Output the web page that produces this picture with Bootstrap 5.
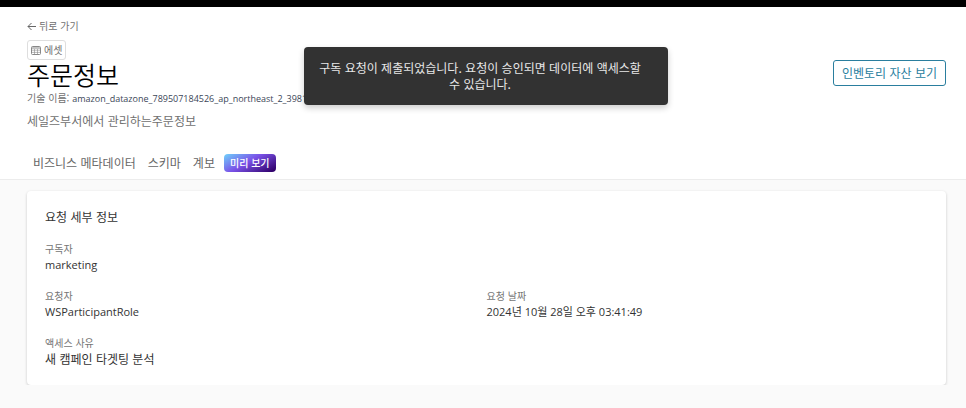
<!DOCTYPE html>
<html lang="ko">
<head>
<meta charset="utf-8">
<meta name="viewport" content="width=device-width, initial-scale=1">
<title>주문정보</title>
<link href="https://cdn.jsdelivr.net/npm/bootstrap@5.3.0/dist/css/bootstrap.min.css" rel="stylesheet">
<style>
body{font-family:"Noto Sans CJK KR",sans-serif;font-size:12px;line-height:16px;background:#fafafa;color:#333}
.topbar{height:7px;background:#000}
.gutter{padding-left:27px;padding-right:20px}
.page-head{border-bottom:1px solid #ececec;padding-top:11px}
.tiny{font-size:10px;line-height:16px}
.soft{color:#707070}
.back-link{gap:3px}
.kind{border:1px solid #dedede;border-radius:3px;padding:1px 3px;gap:3px;margin-top:6px}
.asset-title{font-size:25px;line-height:28px;color:#000;font-weight:350}
.tech-line{margin-top:2px}
.tech{color:#3b4657;font-family:"Open Sans",sans-serif;font-size:9px}
.desc{margin-top:6px}
.btn-asset{--bs-btn-color:#2a7e9e;--bs-btn-border-color:#2a7e9e;--bs-btn-hover-bg:#2a7e9e;--bs-btn-hover-color:#fff;--bs-btn-font-size:12px;--bs-btn-padding-x:8px;--bs-btn-padding-y:4px;--bs-btn-line-height:16px;--bs-btn-border-radius:3px;margin-top:42px}
.tabs{gap:12px;padding:25px 6px 7px}
.tabs .nav-link{padding:0;color:#666;font-size:12px;line-height:18px}
.tabs .nav-link.active{font-size:10px;font-weight:500;color:#fff;padding:0 6px;border-radius:4px;margin-left:-3px;background:linear-gradient(150deg,#6fd2fb 0%,#7a52e8 45%,#30006a 95%)}
.detail-card{border-radius:4px;box-shadow:0 1px 3px rgba(0,0,0,.2);margin-top:11px;padding:17px 18px 18px}
.detail-title{font-size:12px;line-height:18px;font-weight:400;margin-bottom:16px}
.detail-grid{row-gap:16px}
.detail-grid dt{font-weight:400;font-size:10px;line-height:14px;color:#757575}
.detail-grid dd{font-size:12px;line-height:17px;margin:0}
.detail-grid .latin{font-family:"Open Sans","Noto Sans CJK KR",sans-serif;font-size:11px}
.notice{top:47px;left:6px;right:0;margin:0 auto;width:364px;max-width:90%;padding:13px 26px 13px 14px;background:#323232;color:#e8e8e8;border-radius:4px;box-shadow:0 3px 6px rgba(0,0,0,.2)}
</style>
<script src="https://cdn.jsdelivr.net/npm/bootstrap@5.3.0/dist/js/bootstrap.bundle.min.js" defer></script>
</head>
<body>
<div class="topbar"></div>
<header class="page-head bg-white gutter">
  <div class="d-flex justify-content-between align-items-start">
    <div>
      <a href="#" class="back-link tiny soft d-flex align-items-center text-decoration-none">
        <svg width="9" height="9" viewBox="0 0 9 9" fill="none" stroke="#666" aria-hidden="true"><path d="M9 4.5H1M4.5 1 1 4.5 4.5 8"/></svg>뒤로 가기</a>
      <div class="d-flex"><span class="kind tiny soft d-flex align-items-center">
        <svg width="10" height="9" viewBox="0 0 10 9" fill="none" stroke="#888" aria-hidden="true"><rect x=".5" y=".5" width="9" height="8" rx="1"/><path d="M1 2h8" stroke-width="1"/><path d="M1 4.2h8M1 6.4h8M3.5 3v5M6.5 3v5" stroke-width=".6"/></svg>에셋</span></div>
      <h1 class="asset-title mb-0">주문정보</h1>
      <div class="tech-line tiny text-nowrap"><span class="soft">기술 이름:</span> <span class="tech">amazon_datazone_789507184526_ap_northeast_2_3981</span></div>
      <p class="desc soft mb-0">세일즈부서에서 관리하는주문정보</p>
    </div>
    <a href="#" class="btn btn-asset">인벤토리 자산 보기</a>
  </div>
  <ul class="tabs nav align-items-center">
    <li class="nav-item"><a class="nav-link" href="#">비즈니스 메타데이터</a></li>
    <li class="nav-item"><a class="nav-link" href="#">스키마</a></li>
    <li class="nav-item"><a class="nav-link" href="#">계보</a></li>
    <li class="nav-item"><a class="nav-link active" aria-current="page" href="#">미리 보기</a></li>
  </ul>
</header>
<main class="gutter">
  <section class="detail-card bg-white">
    <h2 class="detail-title">요청 세부 정보</h2>
    <dl class="detail-grid row gx-0 mb-0">
      <div class="col-12"><dt>구독자</dt><dd class="latin">marketing</dd></div>
      <div class="col-6"><dt>요청자</dt><dd class="latin">WSParticipantRole</dd></div>
      <div class="col-6"><dt>요청 날짜</dt><dd class="latin">2024년 10월 28일 오후 03:41:49</dd></div>
      <div class="col-12"><dt>액세스 사유</dt><dd>새 캠페인 타겟팅 분석</dd></div>
    </dl>
  </section>
</main>
<div class="notice position-absolute" role="status"><p class="mb-0 text-center">구독 요청이 제출되었습니다. 요청이 승인되면 데이터에 액세스할 수 있습니다.</p></div>
</body>
</html>
